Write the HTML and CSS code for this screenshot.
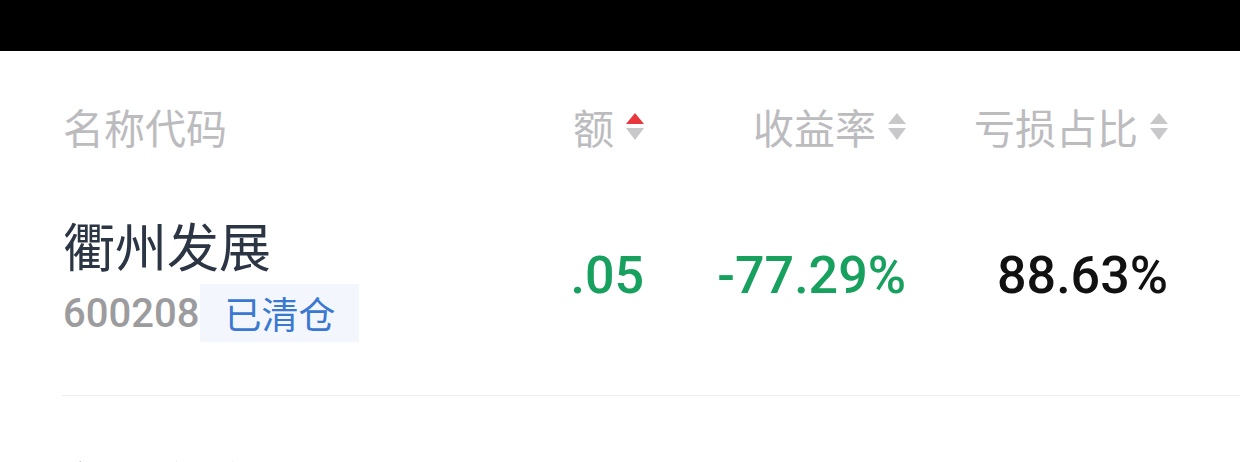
FILE: index.html
```html
<!DOCTYPE html>
<html lang="zh-CN">
<head>
    <meta charset="UTF-8">
    <meta name="viewport" content="width=device-width, initial-scale=1.0">
    <title>持仓列表</title>
    <link rel="stylesheet" href="styles.css">
</head>
<body>
    <div class="status-bar"></div>

    <div class="table">
        <div class="head">
            <div class="col-name">名称代码</div>
            <div class="col">额<span class="sort"><i class="up active"></i><i class="down"></i></span></div>
            <div class="col">收益率<span class="sort"><i class="up"></i><i class="down"></i></span></div>
            <div class="col">亏损占比<span class="sort"><i class="up"></i><i class="down"></i></span></div>
        </div>

        <div class="row">
            <div class="col-name">
                <div class="stock-name">衢州发展</div>
                <div class="stock-code">600208<span class="tag">已清仓</span></div>
            </div>
            <div class="col num green">.05</div>
            <div class="col num green">-77.29%</div>
            <div class="col num">88.63%</div>
        </div>

        <div class="row next">
            <div class="col-name">
                <div class="stock-name">华夏银行</div>
            </div>
        </div>
    </div>
</body>
</html>
```

FILE: styles.css
```css
body {
    margin: 0;
    background: #fff;
    font-family: "Noto Sans CJK SC", "Noto Sans", sans-serif;
    overflow: hidden;
}

.status-bar {
    height: 51px;
    background: #000;
}

.table {
    padding-left: 62px;
}

.head,
.row {
    display: flex;
    align-items: center;
    padding-right: 72px;
}

.head {
    height: 150px;
    font-size: 41px;
    color: #bcbcbf;
}

.head .col-name {
    padding-left: 1px;
}

.col-name {
    flex: 1;
}

.col {
    width: 262px;
    display: flex;
    justify-content: flex-end;
    align-items: center;
}

.sort {
    display: flex;
    flex-direction: column;
    gap: 4px;
    margin-left: 12px;
}

.sort i {
    width: 0;
    height: 0;
    border-left: 9px solid transparent;
    border-right: 9px solid transparent;
}

.sort .up {
    border-bottom: 11px solid #c8c8cb;
}

.sort .down {
    border-top: 12px solid #c8c8cb;
}

.sort .up.active {
    border-bottom-color: #e8383d;
}

.row {
    padding-top: 8px;
    padding-bottom: 53px;
    border-bottom: 1px solid #eeeeee;
}

.row .col-name {
    padding-left: 1px;
}

.stock-name {
    font-size: 52px;
    line-height: 72px;
    color: #2b3544;
}

.stock-code {
    display: flex;
    align-items: center;
    margin-top: 3px;
    font-family: Roboto, "Noto Sans", sans-serif;
    font-size: 40px;
    font-weight: 500;
    color: #9c9c9f;
}

.tag {
    margin-left: 1px;
    padding: 0 24px;
    height: 58px;
    line-height: 58px;
    background: #f3f7fd;
    font-family: "Noto Sans CJK SC", sans-serif;
    font-size: 37px;
    font-weight: 400;
    color: #3b78d2;
}

.num {
    font-family: Roboto, "Noto Sans", sans-serif;
    font-size: 52px;
    font-weight: 500;
    color: #111;
}

.green {
    color: #17a05e;
}

.row.next {
    padding-top: 52px;
    border-bottom: none;
}
```
